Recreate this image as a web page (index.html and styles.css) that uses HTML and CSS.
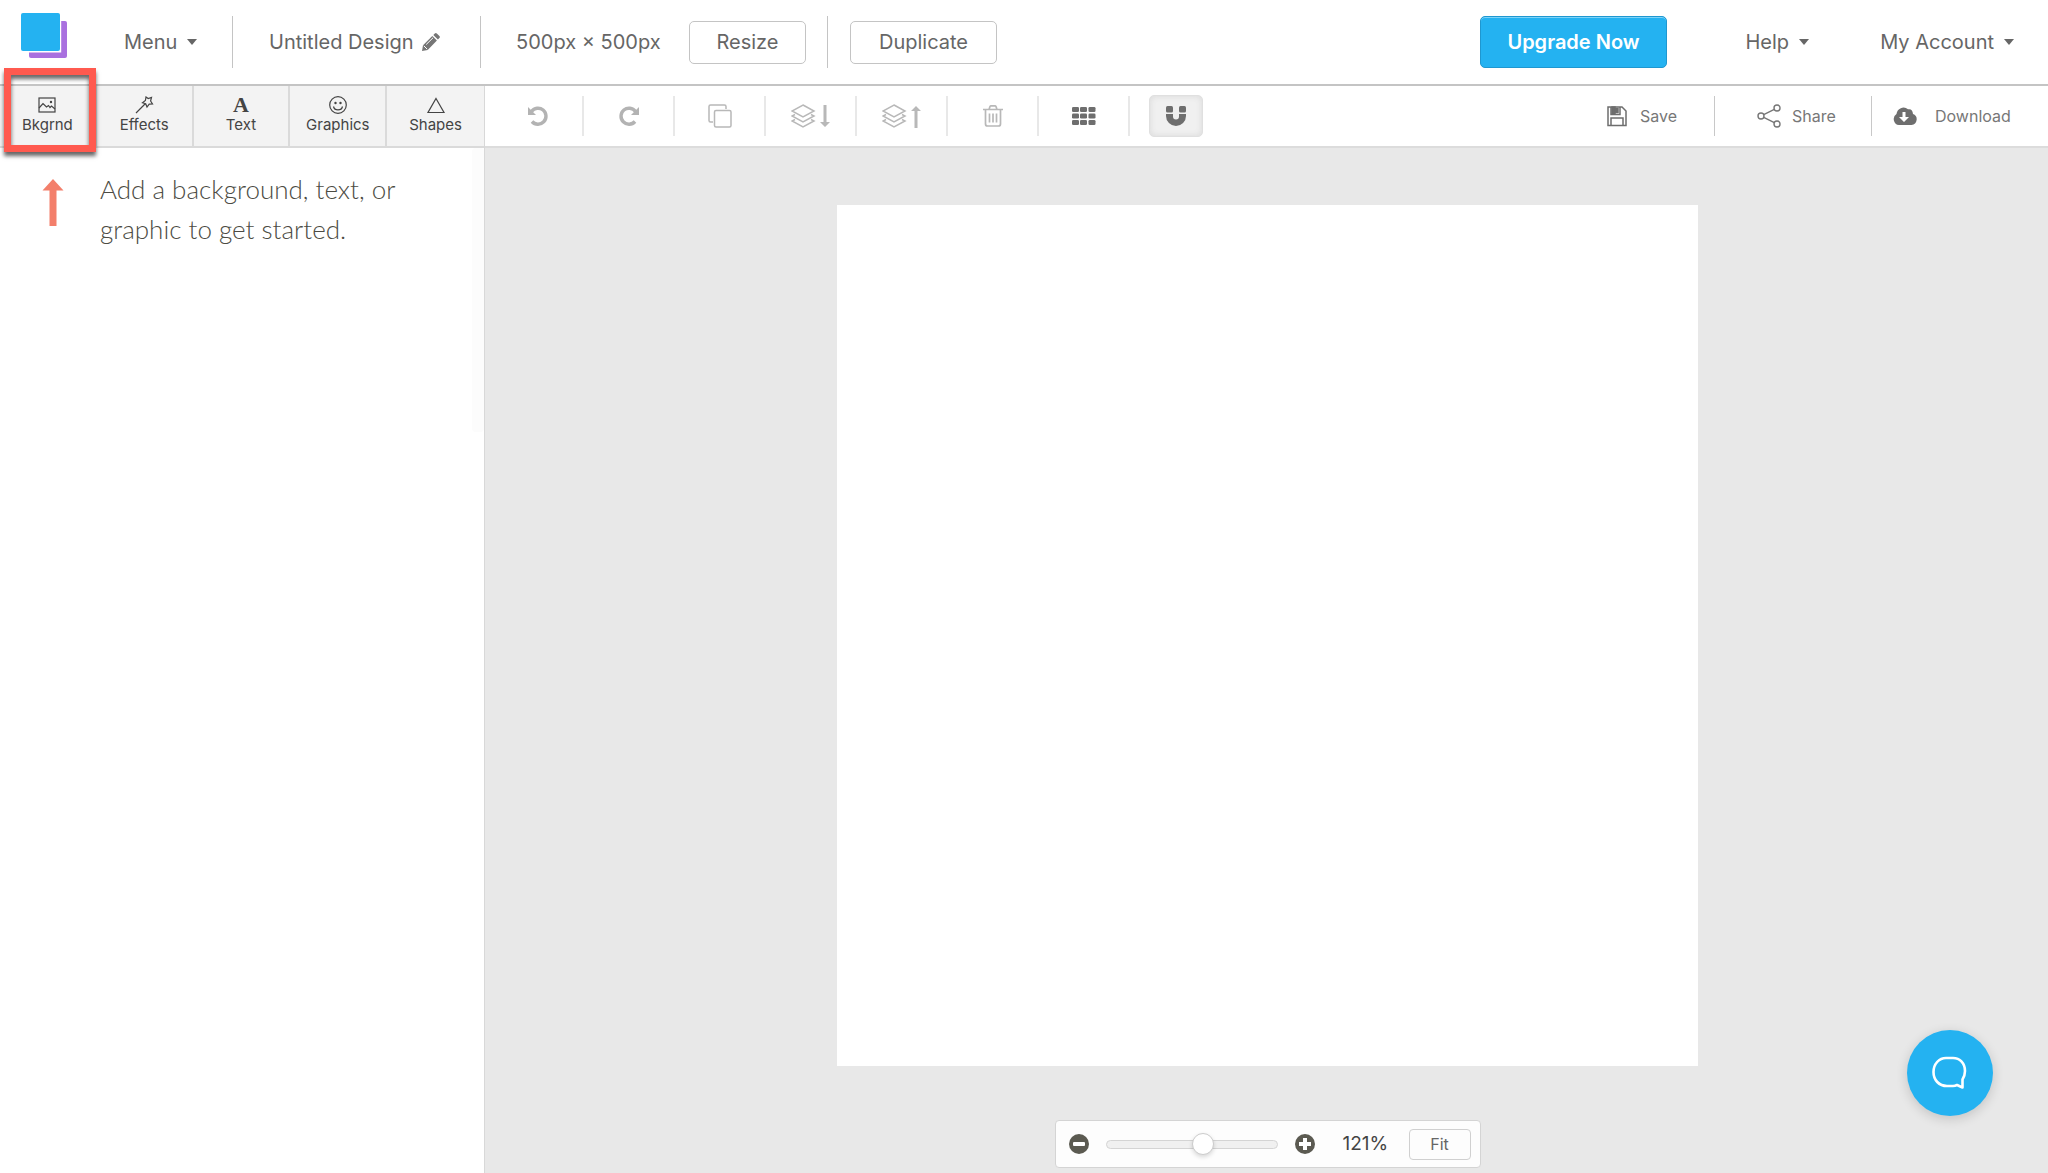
FILE: index.html
```html
<!DOCTYPE html>
<html lang="en">
<head>
<meta charset="utf-8">
<meta name="viewport" content="width=device-width, initial-scale=1">
<title>Untitled Design</title>
<link rel="stylesheet" href="styles.css">
</head>
<body>
<div class="app">
  <header class="header">
    <div class="group group-brand">
      <a class="logo" href="#" aria-label="Home">
        <svg width="46" height="46" viewBox="0 0 46 46"><rect x="8" y="8" width="38" height="37" rx="2" fill="#a970df"/><path d="M0 0h40.200v39.500H0z" fill="#fff"/><rect width="39" height="38" rx="2" fill="#24b2f1"/></svg>
      </a>
      <button class="link">Menu <span class="caret"></span></button>
    </div>
    <div class="group group-title">
      <button class="link">Untitled Design
        <svg width="18" height="18" viewBox="0 0 18 18" fill="#767676"><path d="M1 12.2 10.3 3l4.6 4.6L5.700 16.900 0 18zM11.300 2l1.500-1.500q1-.9 2 0l2.600 2.600q1 1 0 2L15.900 6.600z"/><path d="m1.800 12.800 3.400 3.400M4.200 11.500 11 4.800" stroke="#fff" fill="none"/></svg>
      </button>
    </div>
    <div class="group group-size">
      <span class="size">500px × 500px</span>
      <button class="outline">Resize</button>
    </div>
    <div class="group group-copy">
      <button class="outline outline-wide">Duplicate</button>
    </div>
    <nav class="account">
      <button class="upgrade">Upgrade Now</button>
      <button class="link link-help">Help <span class="caret"></span></button>
      <button class="link link-account">My Account <span class="caret"></span></button>
    </nav>
  </header>

  <aside class="side">
    <nav class="tabs">
      <button class="tab">
        <svg width="20" height="18" viewBox="0 0 20 18"><rect x="2" y="2" width="16" height="14"/><path d="m2 12 4-4.500 3.500 3.500 2-1.500 1.500 2 1.500-1.500 3.500 3"/><circle cx="14" cy="6" r=".6"/></svg>
        Bkgrnd<span class="highlight"></span></button>
      <button class="tab">
        <svg width="20" height="18" viewBox="0 0 20 18"><path d="m2 17 9-9M12 1l2.200 1.600L17.500 1.500 16.600 5l1.900 3-3.300.1L13 11l-1.300-3.300L8.500 6.800l2.900-2.300z"/></svg>
        Effects</button>
      <button class="tab">
        <span class="letter" aria-hidden="true">A</span>
        Text</button>
      <button class="tab">
        <svg width="20" height="18" viewBox="0 0 20 18"><circle cx="10" cy="9" r="8.300"/><path d="M5.500 10.500c1 4.500 8 4.500 9 0"/><circle cx="7.500" cy="7" r=".6"/><circle cx="12.500" cy="7" r=".6"/></svg>
        Graphics</button>
      <button class="tab">
        <svg width="20" height="18" viewBox="0 0 20 18"><path d="m10 2.500 8 14H2z"/></svg>
        Shapes</button>
    </nav>
    <div class="intro">
      <svg width="22" height="48" viewBox="0 0 22 48"><path d="m11 0 10.500 11.500h-7V47h-7V11.500h-7z" fill="#f37f6b"/></svg>
      <p>Add a background, text, or graphic to get started.</p>
      <span class="scroll"></span>
    </div>
  </aside>

  <main class="main">
    <div class="toolbar">
      <button class="tool" aria-label="Undo"><svg width="22" height="22" viewBox="0 0 22 22"><path d="M4.500 6.500A8 8 0 1 1 5 16.500" fill="none" stroke="#b3b3b3" stroke-width="3.400"/><path d="M1 2v8h8z" fill="#b3b3b3"/></svg></button>
      <button class="tool" aria-label="Redo"><svg width="22" height="22" viewBox="0 0 22 22"><path d="M17.500 6.500A8 8 0 1 0 17 16.500" fill="none" stroke="#b3b3b3" stroke-width="3.400"/><path d="M21 2v8h-8z" fill="#b3b3b3"/></svg></button>
      <button class="tool" aria-label="Copy"><svg width="24" height="24" viewBox="0 0 24 24" fill="none" stroke="#b8b8b8" stroke-width="1.500"><rect x="6.500" y="6.500" width="16.500" height="16.500" rx="1.500"/><path d="M5 18H2.500Q1 18 1 16.500v-14Q1 1 2.500 1h14Q18 1 18 2.500V5"/></svg></button>
      <button class="tool" aria-label="Send backward"><svg width="40" height="26" viewBox="0 0 40 26" fill="none" stroke="#b8b8b8" stroke-width="1.500"><path d="M12 2 23 8 12 14 1 8zM4 11.500 1 13l11 6 11-6-3-1.500M4 16.500 1 18l11 6 11-6-3-1.500"/><path d="M32.500 2h3v17h3.500l-5 5-5-5h3.500z" fill="#b8b8b8" stroke="none"/></svg></button>
      <button class="tool" aria-label="Bring forward"><svg width="40" height="26" viewBox="0 0 40 26" fill="none" stroke="#b8b8b8" stroke-width="1.500"><path d="M12 2 23 8 12 14 1 8zM4 11.500 1 13l11 6 11-6-3-1.500M4 16.500 1 18l11 6 11-6-3-1.500"/><path d="M32.500 25h3V8h3.500l-5-5-5 5h3.500z" fill="#b8b8b8" stroke="none"/></svg></button>
      <button class="tool" aria-label="Delete"><svg width="20" height="24" viewBox="0 0 20 24" fill="none" stroke="#b8b8b8" stroke-width="1.700"><path d="M0 5.500h20M2.500 5.500V20q0 2 2 2h11q2 0 2-2V5.500M6 5.500l1-3q.3-.7 1-.7h4q.7 0 1 .7l1 3M6.500 9.500v9M10 9.500v9M13.500 9.500v9"/></svg></button>
      <button class="tool" aria-label="Grid"><svg width="24" height="20" viewBox="0 0 24 20" fill="#6e6e6e"><rect x="0" y="1" width="7" height="5" rx="1.300"/><rect x="8" y="1" width="7" height="5" rx="1.300"/><rect x="16.500" y="1" width="7" height="5" rx="1.300"/><rect x="0" y="7.500" width="7" height="5" rx="1.300"/><rect x="8" y="7.500" width="7" height="5" rx="1.300"/><rect x="16.500" y="7.500" width="7" height="5" rx="1.300"/><rect x="0" y="14" width="7" height="5" rx="1.300"/><rect x="8" y="14" width="7" height="5" rx="1.300"/><rect x="16.500" y="14" width="7" height="5" rx="1.300"/></svg></button>
      <button class="magnet" aria-label="Snap" aria-pressed="true"><svg width="20" height="20" viewBox="0 0 20 20" fill="#6e6e6e"><rect width="7" height="6.500" rx="1.500"/><rect x="13" width="7" height="6.500" rx="1.500"/><path d="M0 8h7v2.500a3 3 0 0 0 6 0V8h7v2a10 10 0 0 1-20 0z"/></svg></button>
      <div class="files">
        <button class="file file-save"><svg width="20" height="22" viewBox="0 0 20 22" fill="none" stroke="#6e6e6e" stroke-width="1.500"><path d="M1 2h14l4 4v14.500H1zM4 20.500V13h12v7.500M4 2v7.500h9V2"/><path d="M5 2h3v7H5zM9.500 3.500v4h1.500v-4z" fill="#6e6e6e"/></svg>Save</button>
        <button class="file file-share"><svg width="24" height="26" viewBox="0 0 24 26" fill="none" stroke="#777" stroke-width="1.400"><circle cx="4" cy="13" r="3"/><circle cx="20" cy="5" r="3"/><circle cx="20" cy="21" r="3"/><path d="m6.700 11.600 10.600-5.200M6.700 14.400l10.600 5.200"/></svg>Share</button>
        <button class="file file-download"><svg width="24" height="20" viewBox="0 0 24 20"><path d="M6 19a6 6 0 0 1-2.500-11A7 7 0 0 1 15 3.300q4.500-1 5 4.700A5.700 5.700 0 0 1 18.500 19z" fill="#6e6e6e"/><path d="M9.500 6h3v5H16l-5 5-5-5h3.500z" fill="#fff"/></svg>Download</button>
      </div>
    </div>
    <section class="workspace">
      <div class="artboard"></div>
      <div class="zoom">
        <button class="round" aria-label="Zoom out"><svg width="20" height="20" viewBox="0 0 20 20"><circle cx="10" cy="10" r="10" fill="#5b5a51"/><rect x="4" y="8" width="12" height="4" rx="1" fill="#fff"/></svg></button>
        <input class="slider" type="range" min="0" max="100" value="58" aria-label="Zoom">
        <button class="round" aria-label="Zoom in"><svg width="20" height="20" viewBox="0 0 20 20"><circle cx="10" cy="10" r="10" fill="#5b5a51"/><path d="M8 4h4v4h4v4h-4v4H8v-4H4V8h4z" fill="#fff"/></svg></button>
        <output class="percent">121%</output>
        <button class="fit">Fit</button>
      </div>
    </section>
  </main>
  <button class="chat" aria-label="Open chat"><svg width="36" height="34" viewBox="0 0 36 34" fill="none" stroke="#fff" stroke-width="2.600" stroke-linejoin="round"><path d="M14 2h7c7 0 12 5.500 12 13 0 4-1 6-2.500 8.500v8L25 29q-2 1-4 1h-6C7 30 1.500 24 1.500 16S7 2 14 2z"/></svg></button>
</div>
</body>
</html>
```
FILE: styles.css
```css
* { box-sizing: border-box; }
body {
  margin: 0;
  background: #fff;
  color: #666;
  font: 20px/24px Inter, sans-serif;
}
button {
  margin: 0;
  padding: 0;
  border: 0;
  background: none;
  color: inherit;
  font: inherit;
  white-space: nowrap;
  cursor: pointer;
}
svg { display: block; flex: none; }

.app {
  display: grid;
  grid-template: auto 1fr / 485px 1fr;
  min-height: 100vh;
}

/* Header */
.header {
  grid-column: 1 / -1;
  display: flex;
  align-items: center;
  height: 86px;
  border-bottom: 2px solid #c4c4c4;
}
.group {
  display: flex;
  align-items: center;
  height: 52px;
  border-right: 1px solid #c4c4c4;
}
.group-brand { width: 233px; padding-left: 21px; gap: 57px; }
.group-title { width: 248px; padding-left: 36px; }
.group-size { width: 347px; padding: 0 21px 0 35px; justify-content: space-between; }
.group-copy { padding-left: 22px; border: 0; }
.logo { align-self: flex-start; margin-top: -3px; }
.link { display: flex; align-items: center; gap: 8px; }
.caret {
  margin-left: 2px;
  border: solid transparent;
  border-width: 6px 5px 0;
  border-top-color: #666;
}
.outline {
  width: 117px;
  height: 43px;
  border: 1px solid #c4c4c4;
  border-radius: 5px;
}
.outline-wide { width: 147px; }
.account {
  display: flex;
  align-items: center;
  margin-left: auto;
  padding-right: 34px;
}
.upgrade {
  width: 187px;
  height: 52px;
  border: 1px solid #1f97d0;
  border-radius: 5px;
  background: #24b2f1;
  box-shadow: inset 0 1px #7bd2f8;
  color: #fff;
  font-weight: 600;
}
.link-help, .link-account { justify-content: flex-end; }
.link-help { width: 142px; }
.link-account { width: 205px; }

/* Side panel */
.side { border-right: 1px solid #d8d8d8; }
.tabs {
  display: grid;
  grid-template-columns: repeat(5, 1fr);
  height: 62px;
  border-bottom: 2px solid #dadada;
  background: #f3f3f3;
}
.tab {
  position: relative;
  display: flex;
  flex-direction: column;
  align-items: center;
  gap: 1px;
  padding-top: 10px;
  border-right: 2px solid #dadada;
  color: #444;
  font-size: 15px;
  line-height: 20px;
}
.tab:last-child { border: 0; }
.tab svg { fill: none; stroke: #444; stroke-width: 1.200; }
.letter {
  height: 18px;
  font: bold 22px/18px "Liberation Serif", serif;
}
.highlight {
  position: absolute;
  inset: -18px -1px -6px 4px;
  border: 7px solid #ff5a4f;
  box-shadow: 0 4px 4px rgba(0, 0, 0, .6), inset 0 4px 4px rgba(0, 0, 0, .6);
}
.intro {
  display: flex;
  gap: 36px;
  padding-left: 42px;
  color: #4c4b43;
  font: 300 26px/40px Lato, sans-serif;
}
.intro svg { margin-top: 31px; }
.intro p { flex: 1; margin: 21px 0 0; }
.scroll {
  width: 12px;
  height: 284px;
  border-radius: 4px;
  background: #fcfcfc;
}

/* Toolbar */
.main { display: flex; flex-direction: column; min-width: 0; }
.toolbar {
  display: flex;
  align-items: center;
  height: 62px;
  padding-left: 8px;
  border-bottom: 2px solid #dcdcdc;
}
.tool {
  display: flex;
  align-items: center;
  justify-content: center;
  width: 91px;
  height: 40px;
  border-right: 2px solid #e8e8e8;
}
.magnet {
  display: grid;
  place-items: center;
  width: 54px;
  height: 42px;
  margin-left: 19px;
  border: 1px solid #e0e0e0;
  border-radius: 5px;
  background: #f0f0f0;
  box-shadow: inset 0 0 6px #d8d8d8;
}
.files { display: flex; margin-left: auto; }
.file {
  display: flex;
  align-items: center;
  height: 40px;
  border-right: 1px solid #c8c8c8;
  color: #777;
  font-size: 16px;
}
.file-save { width: 108px; gap: 13px; }
.file-share { width: 157px; padding-left: 42px; gap: 11px; }
.file-download { width: 176px; padding-left: 21px; gap: 18px; border: 0; }

/* Workspace */
.workspace {
  display: flex;
  flex: 1;
  flex-direction: column;
  align-items: center;
  justify-content: space-between;
  padding: 57px 0 5px 2px;
  background: #e8e8e8;
}
.artboard {
  height: calc(100vh - 312px);
  aspect-ratio: 1;
  background: #fff;
}
.zoom {
  display: flex;
  align-items: center;
  height: 48px;
  padding: 0 9px 0 13px;
  border: 1px solid #d4d4d4;
  border-radius: 4px;
  background: #fdfdfd;
  color: #444;
}
.slider {
  width: 172px;
  height: 24px;
  margin: 0 17px;
  appearance: none;
  background: none;
}
.slider::-webkit-slider-runnable-track {
  height: 9px;
  border: 1px solid #d4d4d4;
  border-radius: 5px;
  background: #f0f0f0;
}
.slider::-webkit-slider-thumb {
  width: 22px;
  height: 22px;
  margin-top: -8px;
  appearance: none;
  border: 1px solid #ccc;
  border-radius: 50%;
  background: #fff;
  box-shadow: 0 2px 4px rgba(0, 0, 0, .15);
}
.percent { width: 94px; padding-left: 28px; font-size: 19px; }
.fit {
  width: 62px;
  height: 31px;
  border: 1px solid #d0d0d0;
  border-radius: 4px;
  color: #666;
  font-size: 16px;
}

/* Chat launcher */
.chat {
  position: fixed;
  right: 55px;
  bottom: 57px;
  display: grid;
  place-items: center;
  width: 86px;
  height: 86px;
  border-radius: 50%;
  background: #24b2f1;
  box-shadow: 0 3px 12px rgba(0, 0, 0, .16);
}
```
